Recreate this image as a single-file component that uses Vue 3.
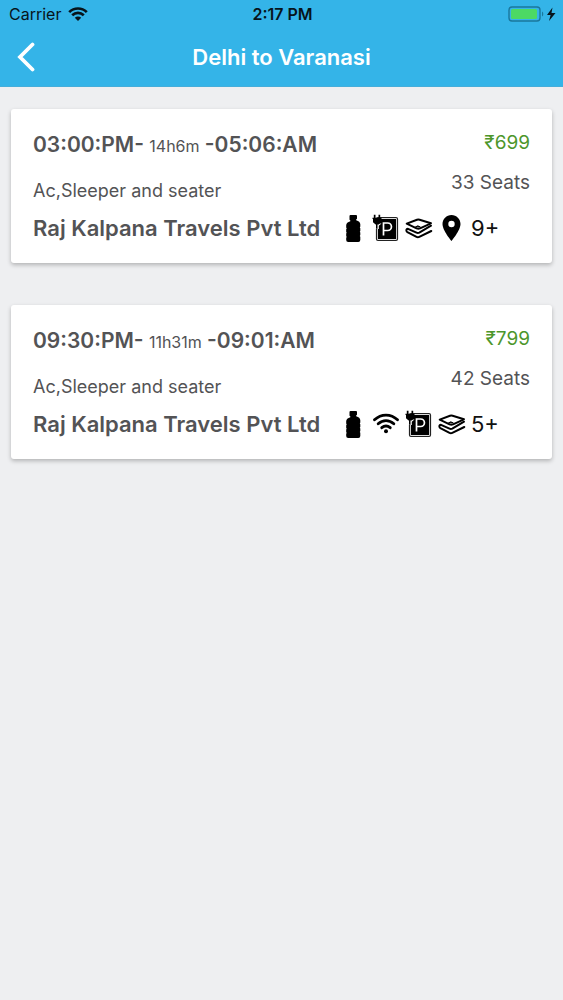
<script setup>
const buses = [
  {
    id: 1,
    departs: '03:00:PM-',
    duration: '14h6m',
    arrives: '-05:06:AM',
    fare: '₹699',
    seats: '33 Seats',
    type: 'Ac,Sleeper and seater',
    operator: 'Raj Kalpana Travels Pvt Ltd',
    amenities: ['bottle', 'charging', 'blanket', 'location'],
    more: '9+'
  },
  {
    id: 2,
    departs: '09:30:PM-',
    duration: '11h31m',
    arrives: '-09:01:AM',
    fare: '₹799',
    seats: '42 Seats',
    type: 'Ac,Sleeper and seater',
    operator: 'Raj Kalpana Travels Pvt Ltd',
    amenities: ['bottle', 'wifi', 'charging', 'blanket'],
    more: '5+'
  }
]
</script>

<template>
  <div class="screen">
    <header class="header">
      <div class="status">
        <div class="carrier">
          <span>Carrier</span>
          <svg width="20" height="14" viewBox="0 0 20 14" aria-hidden="true">
            <g fill="none" stroke="#07141b" stroke-width="2.7">
              <path d="M1.2 5.1C6.2.3 13.8.3 18.8 5.1" />
              <path d="M4.2 8.2c3.4-3.1 8.2-3.1 11.6 0" />
            </g>
            <path d="M6.8 10.8c1.9-1.7 4.5-1.7 6.4 0L10 14z" fill="#07141b" />
          </svg>
        </div>
        <span class="clock">2:17 PM</span>
        <div class="power">
          <svg width="48" height="16" viewBox="0 0 48 16" aria-hidden="true">
            <rect x="1" y="1" width="31" height="14" rx="3" fill="none" stroke="#1a779c" stroke-width="1.4" />
            <rect x="3" y="3" width="26" height="10" rx="1.5" fill="#4cd964" />
            <path d="M34 5.5c1.7.7 1.7 4.3 0 5z" fill="#1a779c" />
            <path d="M44.5 1.5 39 9h3.6L41 15 47.5 7h-4z" fill="#07141b" />
          </svg>
        </div>
      </div>
      <nav class="nav">
        <button class="back" type="button" aria-label="Back">
          <svg width="20" height="30" viewBox="0 0 20 30" aria-hidden="true">
            <path d="M16.5 2.5 4 15l12.5 12.5" fill="none" stroke="#fff" stroke-width="3.8" stroke-linecap="round" stroke-linejoin="miter" />
          </svg>
        </button>
        <h1 class="title">Delhi to Varanasi</h1>
      </nav>
    </header>

    <main class="list">
      <article v-for="bus in buses" :key="bus.id" class="card">
        <div class="summary">
          <div class="trip">
            <p class="times">{{ bus.departs }} <span class="duration">{{ bus.duration }}</span> {{ bus.arrives }}</p>
            <p class="type">{{ bus.type }}</p>
          </div>
          <div class="booking">
            <p class="fare">{{ bus.fare }}</p>
            <p class="seats">{{ bus.seats }}</p>
          </div>
        </div>
        <div class="details">
          <h2 class="operator">{{ bus.operator }}</h2>
          <div class="amenities">
            <svg v-for="item in bus.amenities" :key="item" width="28" height="28" viewBox="0 0 28 28" role="img" :aria-label="item">
              <path
                v-if="item === 'bottle'"
                fill="#000"
                d="M11.5 1h5.5q1 0 1 1v2.5q0 .6-.8.8v.9c2.5.7 4.1 2 4.1 4v2.4l-.5.8.5.9v2.600l-.5.8.5.9v2.500l-.5.8.5.9V26q0 2-2 2H9.200q-2 0-2-2v-2.200l.5-.9-.5-.8v-2.500l.5-.9-.5-.8v-2.600l.5-.9-.5-.8v-2.400c0-2 1.600-3.300 4.100-4v-.9q-.8-.2-.8-.8V2q0-1 1-1z"
              />
              <g v-else-if="item === 'charging'">
                <rect x="4.5" y="3.5" width="21" height="23" rx="1.5" fill="#ddd" stroke="#222" stroke-width="1.2" />
                <rect x="6" y="5" width="18" height="20" fill="#000" />
                <path d="M11.5 21.5V9h4.2a3.5 3.5 0 0 1 0 7.5h-4.2" fill="none" stroke="#fff" stroke-width="1.7" />
                <path d="M2.5 9.500h7l-2.700 2.200v3.300H3.400z" fill="#fff" />
                <path d="M1.800.8h1.700v3h3v-3h1.700v3h1.300v1.200h-.4v3.200L6.700 10.500H5.500v4.300H4V10.500h-.4L1 8.200V5H.5V3.800h1.300z" fill="#000" />
              </g>
              <g v-else-if="item === 'blanket'" fill="none" stroke="#000" stroke-width="2" stroke-linejoin="round" stroke-linecap="round">
                <path d="M1.700 9.600 12 5.800q1.300-.4 2.600 0L26 9.300 15 14.400q-1.700.7-3.400 0z" />
                <path d="M10.800 12.600q1.900-1.700 4.200.1z" fill="#000" stroke-width="1" />
                <path d="M26 11.700 14.300 18.700q-1.400.7-2.800 0L3 14.800q-2 .2-1.600 1.800.1 1 1 1.500l9.100 4.700q1.400.7 2.800 0L26.300 17" />
              </g>
              <path
                v-else-if="item === 'location'"
                fill="#000"
                fill-rule="evenodd"
                d="M13.500 1C8.500 1 4.500 5 4.500 10c0 6.500 9 17 9 17s9-10.500 9-17c0-5-4-9-9-9zm0 5.800a3.200 3.200 0 1 1 0 6.400 3.200 3.200 0 0 1 0-6.400z"
              />
              <g v-else fill="none" stroke="#000" stroke-width="2.9" stroke-linecap="round">
                <path d="M2.500 9.800c6.700-6.300 16.300-6.300 23 0" />
                <path d="M6.200 13.800c4.600-4.200 11-4.200 15.600 0" />
                <path d="M9.800 17.700c2.600-2.200 5.800-2.200 8.400 0" />
                <circle cx="14" cy="21.300" r="2" fill="#000" stroke="none" />
              </g>
            </svg>
            <span class="more">{{ bus.more }}</span>
          </div>
        </div>
      </article>
    </main>
  </div>
</template>

<style>
body {
  margin: 0;
  background: #eeeff1;
}
</style>

<style scoped>
.screen {
  min-height: 100vh;
  background: #eeeff1;
  font-family: Inter, "Liberation Sans", sans-serif;
  color: #535355;
}
.header {
  background: #34b4e8;
  border-bottom: 1px solid #45aeda;
}
.status {
  display: grid;
  grid-template-columns: 1fr auto 1fr;
  align-items: center;
  height: 28px;
  padding: 0 7px 0 9px;
  font-size: 16px;
  color: #07141b;
}
.carrier {
  display: flex;
  align-items: center;
  gap: 7px;
}
.clock {
  font-weight: 600;
}
.power {
  display: flex;
  justify-content: flex-end;
}
.nav {
  display: grid;
  grid-template-columns: 56px 1fr 56px;
  align-items: center;
  height: 58px;
}
.back {
  display: flex;
  padding: 0 16px;
  border: 0;
  background: none;
  cursor: pointer;
}
.title {
  margin: 0;
  font-size: 22px;
  line-height: 28px;
  font-weight: 600;
  text-align: center;
  color: #fff;
}
.list {
  display: flex;
  flex-direction: column;
  gap: 42px;
  padding: 22px 11px;
}
.card {
  padding: 21px 22px 20px;
  border-radius: 3px;
  background: #fff;
  box-shadow: 0 2px 4px rgba(0, 0, 0, 0.25);
}
.card p {
  margin: 0;
}
.summary {
  display: flex;
  justify-content: space-between;
  margin-bottom: 10px;
}
.times {
  font-size: 21px;
  line-height: 30px;
  font-weight: 600;
}
.duration {
  font-size: 16px;
  line-height: 16px;
  font-weight: 400;
}
.trip {
  display: flex;
  flex-direction: column;
  gap: 19px;
}
.type {
  font-size: 18px;
  line-height: 24px;
}
.booking {
  display: flex;
  flex-direction: column;
  gap: 14px;
  text-align: right;
  font-size: 19px;
  line-height: 26px;
}
.fare {
  color: #4d962b;
}
.details {
  display: flex;
  align-items: center;
}
.operator {
  flex: 0 0 306px;
  margin: 0;
  font-size: 22px;
  line-height: 30px;
  font-weight: 600;
}
.amenities {
  display: flex;
  align-items: center;
  gap: 5px;
}
.more {
  font-size: 22px;
  line-height: 30px;
  color: #111;
}
</style>
